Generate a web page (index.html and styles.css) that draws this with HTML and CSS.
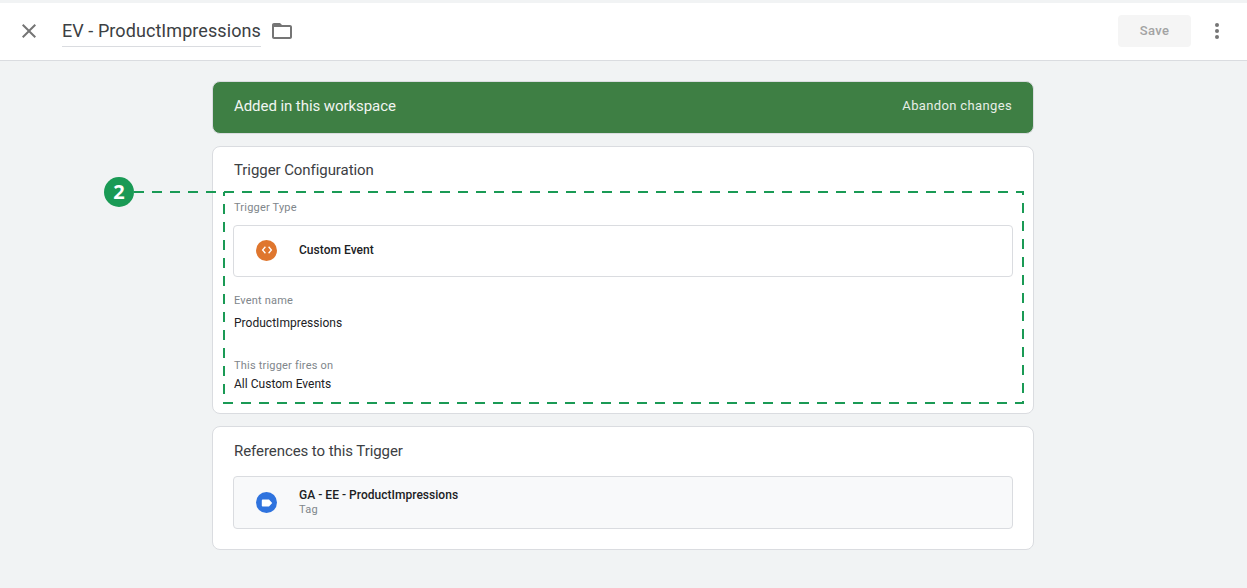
FILE: index.html
```html
<!DOCTYPE html>
<html lang="en">
<head>
<meta charset="utf-8">
<title>EV - ProductImpressions</title>
<link rel="stylesheet" href="styles.css">
</head>
<body>
<header class="topbar">
  <button class="icon-btn close-btn" aria-label="Close">
    <svg width="24" height="24" viewBox="0 0 24 24"><path d="M19 6.41 17.59 5 12 10.59 6.41 5 5 6.41 10.59 12 5 17.59 6.41 19 12 13.41 17.59 19 19 17.59 13.41 12z"/></svg>
  </button>
  <h1 class="title">EV - ProductImpressions</h1>
  <svg class="folder" width="24" height="24" viewBox="0 0 24 24"><path d="M20 6h-8l-2-2H4c-1.1 0-1.99.9-1.99 2L2 18c0 1.1.9 2 2 2h16c1.1 0 2-.9 2-2V8c0-1.1-.9-2-2-2zm0 12H4V8h16v10z"/></svg>
  <div class="spacer"></div>
  <button class="save">Save</button>
  <button class="icon-btn more-btn" aria-label="More">
    <svg width="24" height="24" viewBox="0 0 24 24"><circle cx="12" cy="6" r="2"/><circle cx="12" cy="12" r="2"/><circle cx="12" cy="18" r="2"/></svg>
  </button>
</header>
<main class="content">
  <section class="banner">
    <span class="banner-text">Added in this workspace</span>
    <span class="banner-action">Abandon changes</span>
  </section>
  <section class="card config">
    <h2 class="card-title">Trigger Configuration</h2>
    <div class="label label-type">Trigger Type</div>
    <div class="row row-type">
      <span class="dot dot-orange">
        <svg width="14" height="14" viewBox="0 0 14 14"><path class="chev" d="M5.4 3.800 2.600 7l2.800 3.200M8.600 3.800l2.800 3.200-2.800 3.200"/></svg>
      </span>
      <span class="row-name">Custom Event</span>
    </div>
    <div class="label label-event">Event name</div>
    <div class="value value-event">ProductImpressions</div>
    <div class="label label-fires">This trigger fires on</div>
    <div class="value value-fires">All Custom Events</div>
  </section>
  <section class="card refs">
    <h2 class="card-title">References to this Trigger</h2>
    <div class="row row-ref">
      <span class="dot dot-blue">
        <svg width="14" height="14" viewBox="0 0 14 14"><path fill="#fff" d="M1.800 4.600c0-.6.5-1.100 1.100-1.100h6.100l3.200 3.500-3.200 3.500H2.900c-.6 0-1.100-.5-1.100-1.100z"/></svg>
      </span>
      <span class="row-text">
        <span class="row-name">GA - EE - ProductImpressions</span>
        <span class="row-sub">Tag</span>
      </span>
    </div>
  </section>
</main>
<svg class="annotation" width="1247" height="588" viewBox="0 0 1247 588">
  <path class="dash" d="M134 192H1023V403H224V192"/>
</svg>
<div class="badge">2</div>
</body>
</html>
```
FILE: styles.css
```css
* { box-sizing: border-box; }
html, body { margin: 0; height: 100%; }
body {
  position: relative;
  height: 588px;
  overflow: hidden;
  background: #f1f3f4;
  font-family: Roboto, "Liberation Sans", sans-serif;
  color: #202124;
  padding-top: 3px;
}
.topbar {
  height: 58px;
  background: #fff;
  border-bottom: 1px solid #dadce0;
  display: flex;
  align-items: center;
  padding: 0 17px 2px;
}
.icon-btn { border: 0; background: none; padding: 0; width: 24px; height: 24px; display: flex; }
.icon-btn svg { fill: #757575; }
.close-btn { margin-right: 21px; }
.title {
  margin: 2px 9px 0 0;
  font-size: 18px;
  font-weight: 400;
  line-height: 28px;
  height: 30px;
  color: #3c4043;
  border-bottom: 1px solid #dadce0;
  letter-spacing: 0.07px;
}
.folder { fill: #757575; }
.spacer { flex: 1; }
.save {
  width: 73px;
  height: 32px;
  border: 0;
  border-radius: 4px;
  background: #f5f5f5;
  color: #a3a3a3;
  font: 500 13px Roboto, sans-serif;
  letter-spacing: 0.3px;
  margin-right: 14px;
}
.more-btn { margin-right: 1px; }
.content {
  width: 822px;
  margin: 20px 0 0 212px;
  display: flex;
  flex-direction: column;
}
.banner {
  height: 53px;
  background: #3e7f44;
  border-radius: 8px;
  border: 1px solid #dadce0;
  display: flex;
  align-items: center;
  justify-content: space-between;
  padding: 0 21px 4px;
  color: #fff;
}
.banner-text { font-size: 15px; letter-spacing: -0.07px; color: #f1f5f1; }
.banner-action { font-size: 13px; font-weight: 400; letter-spacing: 0.36px; color: #e6eee6; }
.card {
  background: #fff;
  border: 1px solid #dadce0;
  border-radius: 8px;
  padding: 0 21px;
}
.config { height: 268px; margin-top: 12px; }
.config .card-title { margin-top: 13px; }
.refs { height: 124px; margin-top: 12px; }
.card-title {
  margin: 14px 0 0;
  font-size: 15px;
  font-weight: 400;
  line-height: 20px;
  color: #3c4043;
  letter-spacing: -0.07px;
}
.label { font-size: 11px; line-height: 14px; color: #80868b; letter-spacing: 0.2px; }
.value { font-size: 12px; line-height: 16px; color: #202124; letter-spacing: 0.02px; }
.label-type { margin-top: 21px; }
.label-event { margin-top: 17px; }
.value-event { margin-top: 7px; }
.label-fires { margin-top: 28px; }
.value-fires { margin-top: 3px; }
.row {
  height: 52px;
  margin: 10px -1px 0 -1px;
  padding-left: 22px;
  border: 1px solid #dadce0;
  border-radius: 4px;
  display: flex;
  align-items: center;
}
.row-type { padding-bottom: 2px; }
.row-ref { height: 53px; margin-top: 15px; background: #f8f9fa; }
.dot {
  width: 21px;
  height: 21px;
  border-radius: 50%;
  display: flex;
  align-items: center;
  justify-content: center;
  margin-right: 22px;
  flex: none;
}
.dot-orange { background: #df762e; }
.dot-blue { background: #2f73de; }
.chev { fill: none; stroke: #fff; stroke-width: 1.300; }
.row-name { font-size: 12px; font-weight: 500; color: #202124; letter-spacing: 0.03px; }
.row-text { display: flex; flex-direction: column; }
.row-ref .row-name { line-height: 15px; }
.row-sub { font-size: 11px; line-height: 14px; color: #80868b; letter-spacing: 0.3px; }
.annotation { position: absolute; left: 0; top: 0; pointer-events: none; }
.dash { fill: none; stroke: #1a9a55; stroke-width: 2; stroke-dasharray: 10 8; }
.badge {
  position: absolute;
  left: 104px;
  top: 177px;
  width: 30px;
  height: 30px;
  border-radius: 50%;
  background: #1a9a55;
  color: #fff;
  font: 700 20px/30px "Open Sans", Roboto, sans-serif;
  text-align: center;
}
```
